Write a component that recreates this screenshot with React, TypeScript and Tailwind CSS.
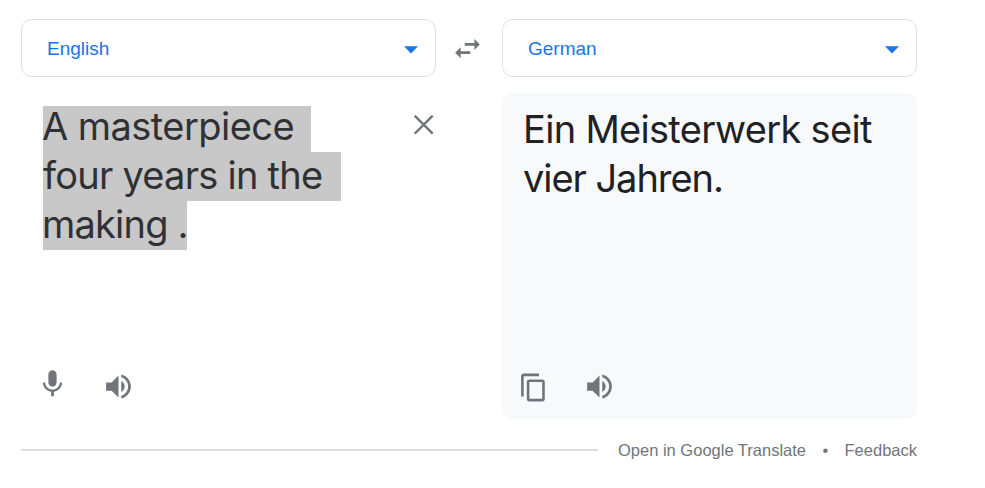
import type { ReactNode } from 'react';

function Icon({ d, className = '' }: { d: string; className?: string }) {
  return (
    <svg viewBox="0 0 24 24" className={`size-[33px] shrink-0 fill-[#70757a] ${className}`}>
      <path d={d} />
    </svg>
  );
}

const SWAP = 'M6.99 11L3 15l3.99 4v-3H14v-2H6.99v-3zM21 9l-3.99-4v3H10v2h7.01v3L21 9z';
const MIC =
  'M12 15c1.66 0 2.99-1.34 2.99-3L15 6c0-1.66-1.34-3-3-3S9 4.34 9 6v6c0 1.66 1.34 3 3 3zm5.3-3c0 3-2.54 5.1-5.3 5.1S6.7 15 6.7 12H5c0 3.42 2.72 6.23 6 6.72V22h2v-3.28c3.28-.48 6-3.3 6-6.72h-1.7z';
const VOLUME =
  'M3 9v6h4l5 5V4L7 9H3zm13.5 3c0-1.77-1.02-3.29-2.5-4.03v8.05c1.48-.73 2.5-2.25 2.5-4.02zM14 3.23v2.06c2.89.86 5 3.54 5 6.71s-2.11 5.85-5 6.71v2.06c4.01-.91 7-4.49 7-8.77s-2.99-7.86-7-8.77z';

function LanguageSelect({ children }: { children: ReactNode }) {
  return (
    <button className="flex h-[58px] w-[415px] items-center justify-between rounded-[11px] border border-[#dfe1e5] pt-[2px] pr-[17px] pl-[25px] text-[19px] text-[#1a73e8]">
      <span>{children}</span>
      <svg viewBox="0 0 14 8" className="mt-[2px] h-2 w-[14px] fill-[#1a73e8]">
        <path d="M0 0.3h14L7 7.5z" />
      </svg>
    </button>
  );
}

export default function App() {
  return (
    <main className="h-[488px] w-[985px] overflow-hidden bg-white pt-[19px] pl-[21px] font-['Liberation_Sans',Arial,sans-serif]">
      <div className="flex w-[896px] items-center justify-between">
        <LanguageSelect>English</LanguageSelect>
        <Icon d={SWAP} className="-ml-[3px]" />
        <LanguageSelect>German</LanguageSelect>
      </div>

      <div className="mt-4 flex w-[896px] justify-between font-[Inter,Roboto,sans-serif] text-[38px] leading-[49px] whitespace-nowrap">
        <section className="flex h-[326px] w-[415px] flex-col justify-between pl-[22px]">
          <div className="flex justify-between pt-[13px]">
            <div className="text-[#303134]">
              <div className="h-[46px] w-[268px] bg-[#c8c8c8] leading-[40px] tracking-[-0.55px]"><span className="-ml-px">A masterpiece</span></div>
              <div className="h-[49px] w-[298px] bg-[#c8c8c8] leading-[46px] tracking-[-0.75px]">four years in the</div>
              <div className="h-[49px] w-[144px] bg-[#c8c8c8] leading-[46px] tracking-[-0.8px]"><span className="-ml-px">making .</span></div>
            </div>
            <svg viewBox="0 0 20 20" className="mt-[9px] mr-[2px] size-5 stroke-[#70757a] stroke-[2.4]">
              <path d="M0.7 0.7l18 18M18.7 0.7l-18 18" />
            </svg>
          </div>
          <div className="-ml-[7px] flex items-end gap-[33px] pb-4">
            <Icon d={MIC} className="mb-[4px]" />
            <Icon d={VOLUME} />
          </div>
        </section>

        <section className="flex h-[326px] w-[415px] flex-col justify-between rounded-[11px] bg-[#f8f9fb] text-[#202124]">
          <div className="pt-[12px] pl-[21px]">
            <div className="tracking-[-0.7px]">Ein Meisterwerk seit</div>
            <div className="tracking-[-1.05px]">vier Jahren.</div>
          </div>
          <div className="flex items-center gap-[37px] pb-4 pl-[19px]">
            <svg viewBox="0 0 25 29" className="mt-px h-[29px] w-[25px] fill-none stroke-[#70757a] stroke-[2.6]">
              <path d="M1.4 23.5V3.2Q1.4 1.9 2.7 1.9H18" />
              <rect x="7.1" y="7.7" width="15.4" height="19.4" rx="1.3" />
            </svg>
            <Icon d={VOLUME} />
          </div>
        </section>
      </div>

      <footer className="mt-[19px] flex w-[896px] items-center text-[16.5px] leading-6 whitespace-nowrap text-[#70757a]">
        <div className="h-[2px] w-[577px] bg-[#dadce0]" />
        <span className="ml-5">Open in Google Translate</span>
        <span className="flex-1 text-center">•</span>
        <span>Feedback</span>
      </footer>
    </main>
  );
}
